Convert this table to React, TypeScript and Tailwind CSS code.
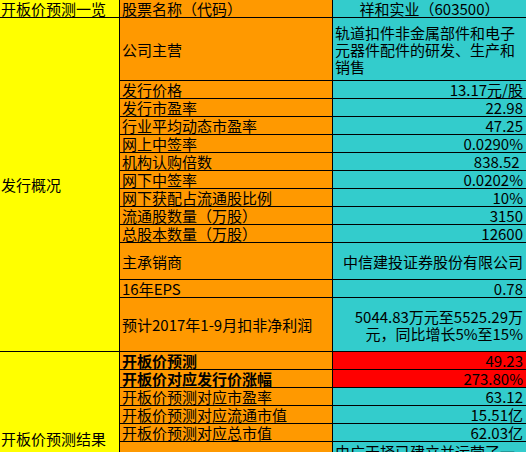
import React from "react";

type Row = {
  label: string;
  value: string | string[];
  h?: string;
  bold?: boolean;
  red?: boolean;
  left?: boolean;
};

const overview: Row[] = [
  { label: "公司主营", value: ["轨道扣件非金属部件和电子", "元器件配件的研发、生产和", "销售"], h: "h-[63px]", left: true },
  { label: "发行价格", value: "13.17元/股" },
  { label: "发行市盈率", value: "22.98" },
  { label: "行业平均动态市盈率", value: "47.25" },
  { label: "网上中签率", value: "0.0290%" },
  { label: "机构认购倍数", value: "838.52 " },
  { label: "网下中签率", value: "0.0202%" },
  { label: "网下获配占流通股比例", value: "10%" },
  { label: "流通股数量（万股）", value: "3150" },
  { label: "总股本数量（万股）", value: "12600" },
  { label: "主承销商", value: "中信建投证券股份有限公司", h: "h-[37px]" },
  { label: "16年EPS", value: "0.78" },
  { label: "预计2017年1-9月扣非净利润", value: ["5044.83万元至5525.29万", "元，同比增长5%至15%"], h: "h-[54px]" },
];

const forecast: Row[] = [
  { label: "开板价预测", value: "49.23", bold: true, red: true },
  { label: "开板价对应发行价涨幅", value: "273.80%", bold: true, red: true },
  { label: "开板价预测对应市盈率", value: "63.12" },
  { label: "开板价预测对应流通市值", value: "15.51亿" },
  { label: "开板价预测对应总市值", value: "62.03亿" },
];

function SheetRow({ row }: { row: Row }) {
  const lines = Array.isArray(row.value) ? row.value : [row.value];
  return (
    <div className={`flex ${row.h ?? "h-[18px]"}`}>
      <div
        className={`w-[213px] shrink-0 border-r border-b border-black bg-[#ff9900] pl-[2px] flex items-center whitespace-nowrap ${
          row.bold ? "font-bold" : ""
        }`}
      >
        {row.label}
      </div>
      <div
        className={`flex-1 border-b border-black flex flex-col justify-center whitespace-pre ${
          row.red ? "bg-[#ff0000]" : "bg-[#33cccc]"
        } ${row.left ? "pl-[2px] text-left" : "pr-[3px] text-right"}`}
      >
        {lines.map((l, i) => (
          <div key={i}>{l}</div>
        ))}
      </div>
    </div>
  );
}

export default function App() {
  return (
    <div className="h-[452px] w-[526px] overflow-hidden bg-white text-black text-[15px] leading-[17px] font-['Noto_Sans_CJK_SC',sans-serif]">
      <div className="flex">
        {/* merged first column */}
        <div className="w-[120px] shrink-0 bg-[#ffff00]">
          <div className="h-[18px] border-r border-b border-black pl-[1px] flex items-center whitespace-nowrap">
            开板价预测一览
          </div>
          <div className="h-[334px] border-r border-b border-black pl-[1px] flex items-center">
            发行概况
          </div>
          <div className="h-[172px] border-r border-black pl-[1px] flex items-center">
            开板价预测结果
          </div>
        </div>

        <div className="flex-1">
          <div className="flex h-[18px]">
            <div className="w-[213px] shrink-0 border-r border-b border-black bg-[#ff9900] pl-[2px] flex items-center">
              股票名称（代码）
            </div>
            <div className="flex-1 border-b border-black bg-[#33cccc] flex items-center justify-center">
              祥和实业（603500）
            </div>
          </div>
          {overview.map((r, i) => (
            <SheetRow key={i} row={r} />
          ))}
          {forecast.map((r, i) => (
            <SheetRow key={i} row={r} />
          ))}
          <div className="flex h-[84px]">
            <div className="w-[213px] shrink-0 border-r border-black bg-[#ff9900]"></div>
            <div className="flex-1 bg-[#33cccc] pl-[2px] pt-[1px]">
              由广天择已建立并运营了一张覆
              <br />
              盖全国的视频节目发行网络
            </div>
          </div>
        </div>
      </div>
    </div>
  );
}
